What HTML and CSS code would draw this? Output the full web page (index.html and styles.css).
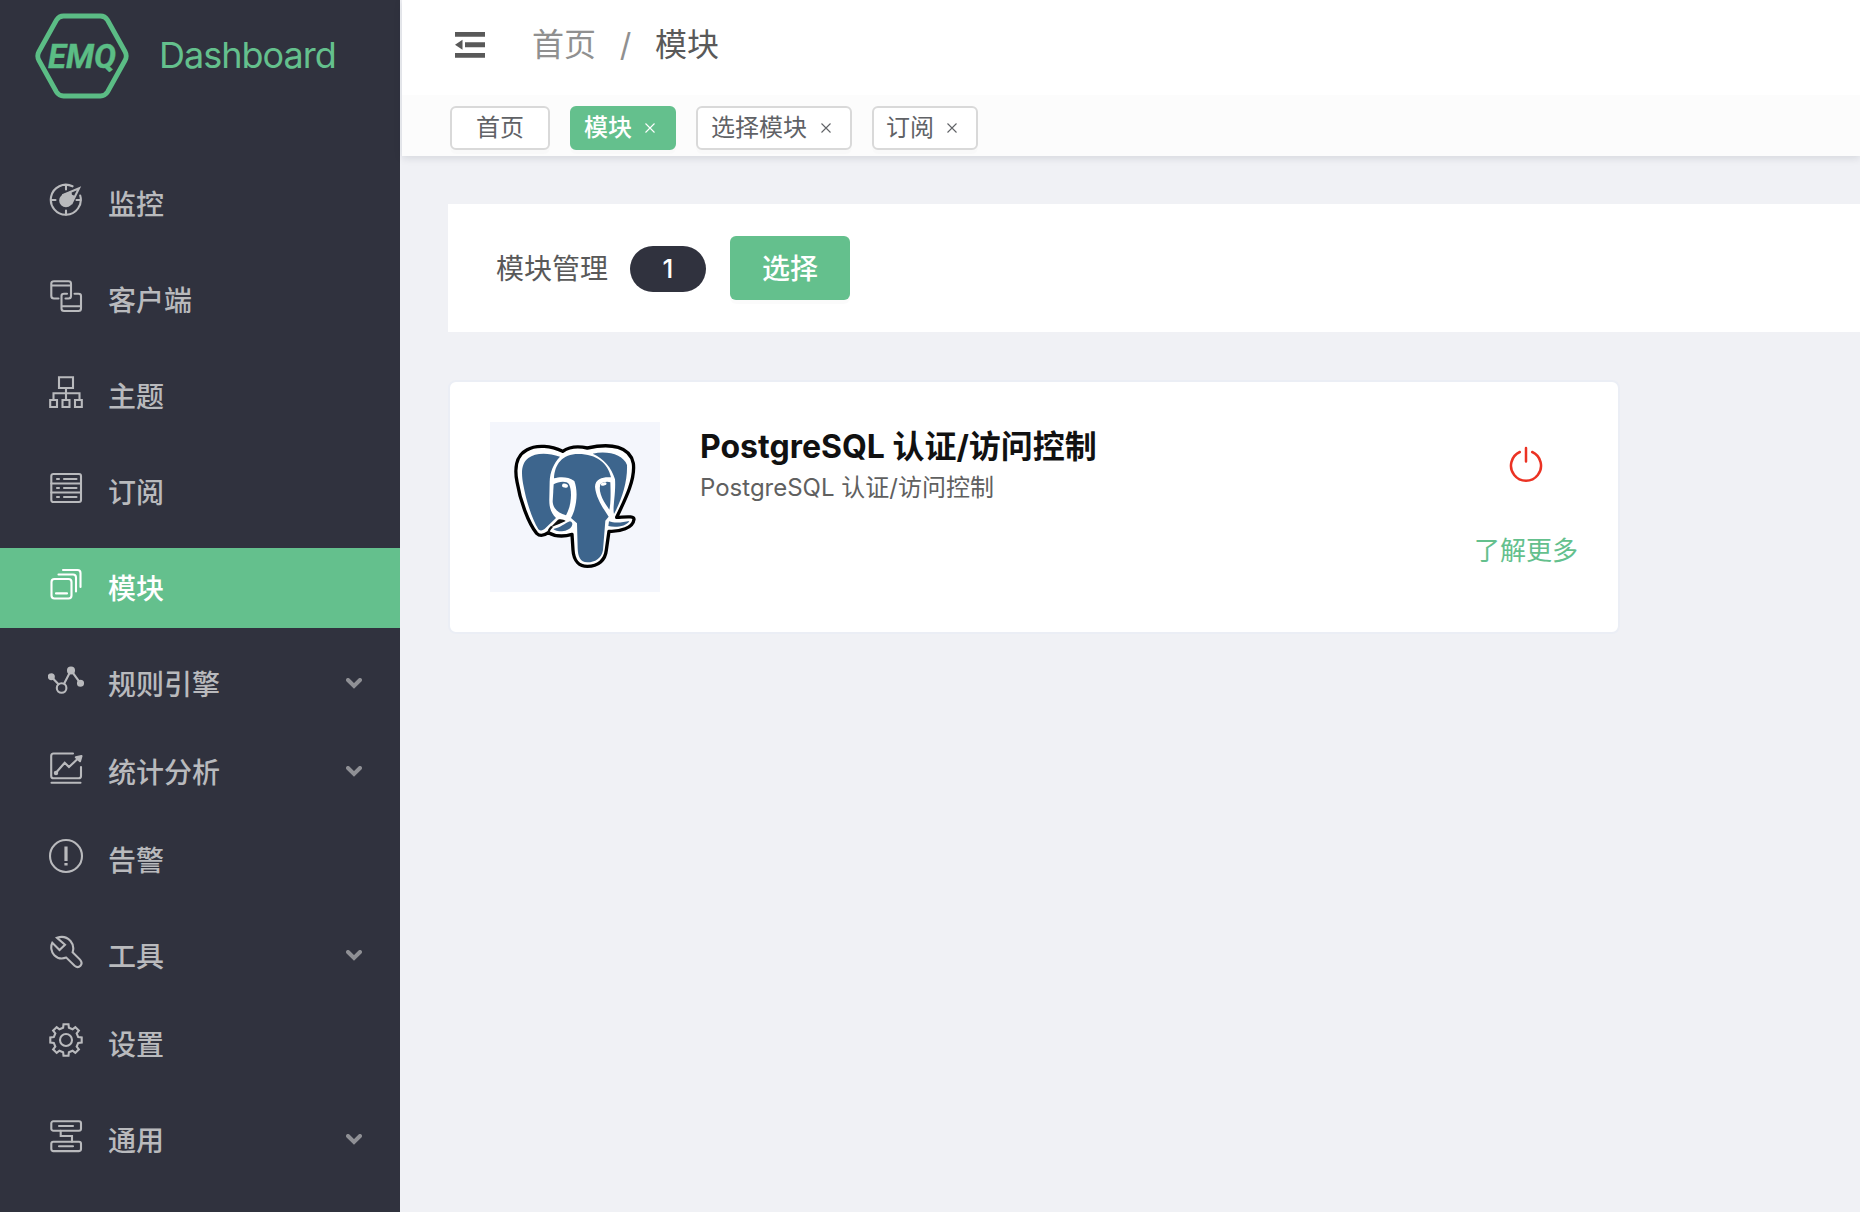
FILE: index.html
```html
<!DOCTYPE html>
<html lang="zh-CN">
<head>
<meta charset="utf-8">
<title>EMQ Dashboard</title>
<link rel="stylesheet" href="styles.css">
</head>
<body>
<div class="app">
  <aside class="sidebar">
    <div class="brand">
      <svg class="brand-logo" viewBox="0 0 94 86">
        <path d="M28.500 3H65.500Q70 3 72.500 7L90 38.500Q92.500 43 90 47.500L72.500 79Q70 83 65.500 83H28.500Q24 83 21.500 79L4 47.500Q1.500 43 4 38.500L21.500 7Q24 3 28.500 3Z" fill="none" stroke="#5bbd85" stroke-width="4.800"/>
        <text class="logo-text" x="13" y="54.500" textLength="68" lengthAdjust="spacingAndGlyphs">EMQ</text>
      </svg>
      <span class="brand-name">Dashboard</span>
    </div>
    <nav class="menu">
      <a class="item">
        <svg class="icon" viewBox="0 0 36 36"><path d="M24.500 4.300A15 15 0 1 0 32.200 13.500M18 3V7.500M18 28.500V33M3 18H7.500M28.500 18H33"/><path d="M15 13L31 6.300L23.500 21.500"/><circle class="solid" cx="18" cy="18.500" r="5.800"/><path class="solid" d="M15 13.500L22.500 10.500L23 13.500L25.500 14.500L23.300 20Z" stroke-linejoin="round"/></svg>
        <span>监控</span>
      </a>
      <a class="item">
        <svg class="icon" viewBox="0 0 36 36"><path d="M10.500 20.500H6Q3.300 20.500 3.300 18V5.500Q3.300 3.200 6 3.200H20.500Q23 3.200 23 5.500V18Q23 20.500 20.500 20.500H17.500M3.300 7.500H23M19 15.800H16Q13.500 15.800 13.500 18V30.500Q13.500 33 16 33H30.500Q33 33 33 30.500V18Q33 15.800 30.500 15.800H26.500M13.500 28.300H33"/></svg>
        <span>客户端</span>
      </a>
      <a class="item">
        <svg class="icon" viewBox="0 0 36 36"><path d="M11 3.200H25V14H11ZM18 14V26M5.500 26V19.200H31.500V26M2.200 26H9V33H2.200ZM14.500 26H21.500V33H14.500ZM27 26H33.800V33H27Z"/></svg>
        <span>主题</span>
      </a>
      <a class="item">
        <svg class="icon" viewBox="0 0 36 36"><rect x="3.300" y="4" width="29.700" height="28" rx="2"/><path d="M3.300 13.500H33M3.300 22.500H33M9 9H11M16 9H28.500M9 18H11M16 18H28.500M9 27H11M16 27H28.500"/></svg>
        <span>订阅</span>
      </a>
      <a class="item active">
        <svg class="icon" viewBox="0 0 36 36"><rect x="3.500" y="13" width="20" height="19.500" rx="3"/><path d="M8 27.400H19M10.500 8.500H25Q28 8.500 28 11.500V25.500M15 4H29.500Q32.500 4 32.500 7V21"/></svg>
        <span>模块</span>
      </a>
      <a class="item submenu">
        <svg class="icon" viewBox="0 0 36 36"><path d="M3.300 14.700L10.500 22.300M16.200 21.500L23 8.300L32.500 21.300"/><circle cx="13.600" cy="26" r="4.800"/><circle class="solid" cx="3.300" cy="14.700" r="2.500"/><circle class="solid" cx="23" cy="8.500" r="3"/><circle class="solid" cx="32.500" cy="21.300" r="2.500"/></svg>
        <span>规则引擎</span>
        <svg class="arrow" viewBox="0 0 16 11"><path d="M2 2L8 8L14 2"/></svg>
      </a>
      <a class="item submenu">
        <svg class="icon" viewBox="0 0 36 36"><path d="M25 3.500H5.500Q3.200 3.500 3.200 6V26Q3.200 28.300 5.500 28.300H30.500Q33 28.300 33 26V17M3.500 32.700H32.500M8 22.700L16.700 12.700L21 17L29 9.500"/><circle class="solid" cx="8" cy="22.900" r="1.200"/><path class="solid" d="M33.500 6L27.800 7.300L32 11.200Z" stroke-linejoin="round"/></svg>
        <span>统计分析</span>
        <svg class="arrow" viewBox="0 0 16 11"><path d="M2 2L8 8L14 2"/></svg>
      </a>
      <a class="item">
        <svg class="icon" viewBox="0 0 36 36"><circle cx="18" cy="18" r="16"/><path class="heavy" d="M18 8.500V23M18 25V27.600"/></svg>
        <span>告警</span>
      </a>
      <a class="item submenu">
        <svg class="icon" viewBox="0 0 36 36"><path d="M9 3.800C14 2 19 3.200 22.500 7C25.300 10.300 26 14 24.600 18.300L32 25.600C36 30.200 31 35.300 26.600 31.800L18.300 23.600C14 25.200 9.500 24.500 6.300 21.200C3 18 2.500 12.500 4.300 8.800L11.500 16L17 10.700Z"/></svg>
        <span>工具</span>
        <svg class="arrow" viewBox="0 0 16 11"><path d="M2 2L8 8L14 2"/></svg>
      </a>
      <a class="item">
        <svg class="icon" viewBox="0 0 36 36"><path d="M15.100 5.800L15.500 2.300H20.500L20.900 5.800L24.580 7.320L27.330 5.130L30.870 8.670L28.680 11.420L30.200 15.100L33.700 15.500V20.500L30.200 20.900L28.680 24.580L30.870 27.330L27.330 30.870L24.580 28.680L20.900 30.200L20.500 33.700H15.500L15.100 30.200L11.420 28.680L8.670 30.870L5.130 27.330L7.320 24.580L5.800 20.900L2.300 20.500V15.500L5.800 15.100L7.320 11.420L5.130 8.670L8.670 5.130L11.420 7.320Z"/><circle cx="18" cy="18" r="6"/></svg>
        <span>设置</span>
      </a>
      <a class="item submenu">
        <svg class="icon" viewBox="0 0 36 36"><rect x="3.300" y="3.300" width="29.700" height="9.400" rx="2"/><rect x="3.300" y="23.700" width="29.700" height="9.400" rx="2"/><path d="M11 8H25M11 28.200H25M12.700 12.700V18H24V23.700"/></svg>
        <span>通用</span>
        <svg class="arrow" viewBox="0 0 16 11"><path d="M2 2L8 8L14 2"/></svg>
      </a>
    </nav>
  </aside>

  <div class="page">
    <div class="top">
      <header class="header">
        <svg class="fold" viewBox="0 0 30 26"><path d="M0 0H30V4.700H0ZM10 10.300H30V15.300H10ZM0 21H30V25.700H0ZM0 12.800L7.500 7.800V17.800Z"/></svg>
        <div class="crumbs"><span>首页</span><span class="slash">/</span><span class="current">模块</span></div>
      </header>
      <div class="tabs">
        <a class="tab home">首页</a>
        <a class="tab on">模块<svg class="close" viewBox="0 0 10 10"><path d="M0.500 0.500L9.500 9.500M9.500 0.500L0.500 9.500"/></svg></a>
        <a class="tab wide">选择模块<svg class="close" viewBox="0 0 10 10"><path d="M0.500 0.500L9.500 9.500M9.500 0.500L0.500 9.500"/></svg></a>
        <a class="tab">订阅<svg class="close" viewBox="0 0 10 10"><path d="M0.500 0.500L9.500 9.500M9.500 0.500L0.500 9.500"/></svg></a>
      </div>
    </div>

    <main class="content">
      <section class="toolbar">
        <span class="toolbar-title">模块管理</span>
        <span class="count">1</span>
        <button class="choose">选择</button>
      </section>

      <article class="module">
        <div class="thumb">
          <svg viewBox="30 36 510 510">
            <path d="M248 124C215 108 170 102 140 120C106 138 104 180 111 215C120 270 145 340 170 370C180 380 192 377 205 368C225 379 250 381 276 373L279 420C281 455 300 469 322 469C355 469 376 450 379 420L387 364C420 366 459 354 462 328C462 317 438 321 410 322C440 260 466 205 460 160C450 110 395 98 322 114C295 108 268 110 248 124Z" fill="#fff" stroke="#000" stroke-width="10" stroke-linejoin="round"/>
            <g fill="#3d658d">
              <path d="M240 140C200 126 165 129 145 144C122 162 124 192 130 225C138 270 155 325 175 358C182 364 188 362 196 355L228 324C212 308 207 290 208 265L209 215C210 185 221 160 240 140Z"/>
              <path d="M222 205C224 163 247 132 295 132C350 132 384 160 393 202C373 200 346 204 345 230C348 265 371 297 386 320L376 332L369 420C365 445 345 457 322 457C300 457 294 440 293 415L291 340L273 324C292 290 294 240 283 213C264 199 240 200 222 205Z"/>
              <path d="M338 131C385 121 430 135 441 165C443 215 425 270 402 312C397 295 408 250 405 208C394 172 372 146 338 131Z"/>
              <path d="M221 223C235 215 259 211 267 223C278 245 273 290 258 316C235 310 219 295 218 275Z"/>
              <path d="M361 223C368 215 384 214 391 217C392 245 393 280 388 299C375 280 353 250 361 223Z"/>
              <path d="M220 357C242 354 254 339 270 334C285 338 276 362 246 364C234 364 224 362 220 357Z"/>
              <path d="M387 334C405 341 430 337 448 333C440 350 405 353 385 348Z"/>
            </g>
            <path d="M212 352L234 329C244 326 252 330 257 333C244 340 232 344 212 352Z" fill="#111"/>
            <path d="M207 370Q203 362 216 350" fill="none" stroke="#111" stroke-width="7"/>
            <g fill="#fff"><ellipse cx="255" cy="227" rx="9" ry="6" transform="rotate(15 255 227)"/><ellipse cx="371" cy="222" rx="9" ry="5" transform="rotate(-15 371 222)"/></g>
          </svg>
        </div>
        <div class="info">
          <h3>PostgreSQL 认证/访问控制</h3>
          <p>PostgreSQL 认证/访问控制</p>
        </div>
        <div class="actions">
          <svg class="power" viewBox="0 0 34 38"><path d="M10.800 6A15 15 0 1 0 23.200 6M17 2V15.500"/></svg>
          <a class="more">了解更多</a>
        </div>
      </article>
    </main>
  </div>
</div>
</body>
</html>
```
FILE: styles.css
```css
* {
  box-sizing: border-box;
}

body {
  margin: 0;
  font-family: Inter, "Noto Sans CJK SC", sans-serif;
  font-size: 28px;
  color: #606060;
  background: #f0f1f5;
}

.app {
  display: flex;
  height: 1212px;
  overflow: hidden;
}

/* Sidebar */
.sidebar {
  flex: none;
  width: 400px;
  background: #30323e;
}

.brand {
  display: flex;
  align-items: center;
  gap: 30px;
  height: 112px;
  padding-left: 35px;
}

.brand-logo {
  width: 94px;
  height: 86px;
}

.logo-text {
  font: italic 700 33px Roboto, sans-serif;
  fill: #5bbd85;
  stroke: #5bbd85;
  stroke-width: 0.4px;
}

.brand-name {
  padding-bottom: 2px;
  font-size: 36px;
  line-height: 44px;
  letter-spacing: -1px;
  color: #64c08d;
}

.menu {
  display: flex;
  flex-direction: column;
  padding-top: 52px;
}

.item {
  display: flex;
  align-items: center;
  height: 80px;
  margin-bottom: 16px;
  padding: 0 38px 0 48px;
  font-weight: 500;
  line-height: 40px;
  color: #b9babd;
}

.item span {
  padding-top: 1px;
}

.item.submenu {
  margin-bottom: 8px;
}

.item.active {
  color: #fff;
  background: #64c08d;
}

.icon {
  width: 36px;
  height: 36px;
  margin: -8px 24px 0 0;
  fill: none;
  stroke: currentColor;
  stroke-width: 2.1;
  stroke-linecap: round;
}

.icon .solid {
  fill: currentColor;
}

.icon .heavy {
  stroke-width: 3.2;
  stroke-linecap: butt;
}

.arrow {
  width: 16px;
  height: 11px;
  margin: -2px 0 0 auto;
  fill: none;
  stroke: #8f9095;
  stroke-width: 4;
  stroke-linecap: round;
}

/* Header and tabs */
.page {
  flex: 1;
  min-width: 0;
}

.top {
  margin-left: 2px;
  background: #fff;
  box-shadow: 0 2px 8px rgba(0, 21, 41, 0.12);
}

.header {
  display: flex;
  align-items: center;
  height: 95px;
  padding: 0 0 5px 53px;
}

.fold {
  width: 30px;
  height: 26px;
  fill: #595959;
}

.crumbs {
  display: flex;
  margin-left: 47px;
  font-size: 32px;
  line-height: 44px;
  color: #909090;
}

.slash {
  width: 59px;
  text-align: center;
}

.current {
  color: #595959;
}

.tabs {
  display: flex;
  align-items: center;
  gap: 20px;
  height: 61px;
  padding: 5px 0 0 48px;
  background: #fcfcfc;
}

.tab {
  display: flex;
  align-items: center;
  height: 44px;
  padding: 0 19px 0 12px;
  border: 2px solid #d9d9d9;
  border-radius: 6px;
  font-size: 24px;
  line-height: 36px;
  color: #606266;
  background: #fff;
  box-shadow: 0 4px 0 rgba(0, 0, 0, 0.012);
}

.tab.home {
  padding: 0 24px;
}

.tab.wide {
  padding: 0 19px 0 13px;
}

.tab.wide .close {
  margin-left: 14px;
}

.tab.on {
  border-color: #64c08d;
  font-weight: 500;
  color: #fff;
  background: #64c08d;
}

.close {
  width: 10px;
  height: 10px;
  margin-left: 13px;
  fill: none;
  stroke: currentColor;
  stroke-width: 1.1;
}

/* Content */
.content {
  padding: 48px 0 0 48px;
}

.toolbar {
  display: flex;
  align-items: center;
  height: 128px;
  padding-left: 48px;
  background: #fff;
}

.toolbar-title {
  padding-top: 1px;
  line-height: 40px;
  color: #595959;
}

.count {
  width: 76px;
  height: 46px;
  margin: 2px 24px 0 22px;
  border-radius: 23px;
  font-size: 26px;
  font-weight: 500;
  line-height: 45px;
  text-align: center;
  color: #fff;
  background: #30323e;
}

.choose {
  width: 120px;
  height: 64px;
  padding: 0 0 2px;
  border: 0;
  border-radius: 6px;
  font: 500 28px/58px "Noto Sans CJK SC", sans-serif;
  color: #fff;
  background: #64c08d;
  box-shadow: 0 4px 0 rgba(0, 0, 0, 0.016);
}

.module {
  display: flex;
  width: 1172px;
  height: 254px;
  margin-top: 48px;
  padding: 40px;
  border: 2px solid #ebeef5;
  border-radius: 8px;
  background: #fff;
}

.thumb {
  width: 170px;
  height: 170px;
  background: #f4f6fc;
}

.thumb svg {
  display: block;
}

.info {
  margin-left: 40px;
}

.info h3 {
  margin: 2px 0 0;
  font-size: 32px;
  font-weight: 700;
  line-height: 46px;
  color: #111;
}

.info p {
  margin: 0;
  font-size: 24px;
  line-height: 36px;
  color: #606060;
}

.actions {
  display: flex;
  flex-direction: column;
  align-items: center;
  margin-left: auto;
  padding-top: 24px;
}

.power {
  width: 34px;
  height: 38px;
  fill: none;
  stroke: #eb3223;
  stroke-width: 2.5;
  stroke-linecap: round;
}

.more {
  margin-top: 47px;
  font-size: 26px;
  line-height: 40px;
  color: #64c08d;
}
```
